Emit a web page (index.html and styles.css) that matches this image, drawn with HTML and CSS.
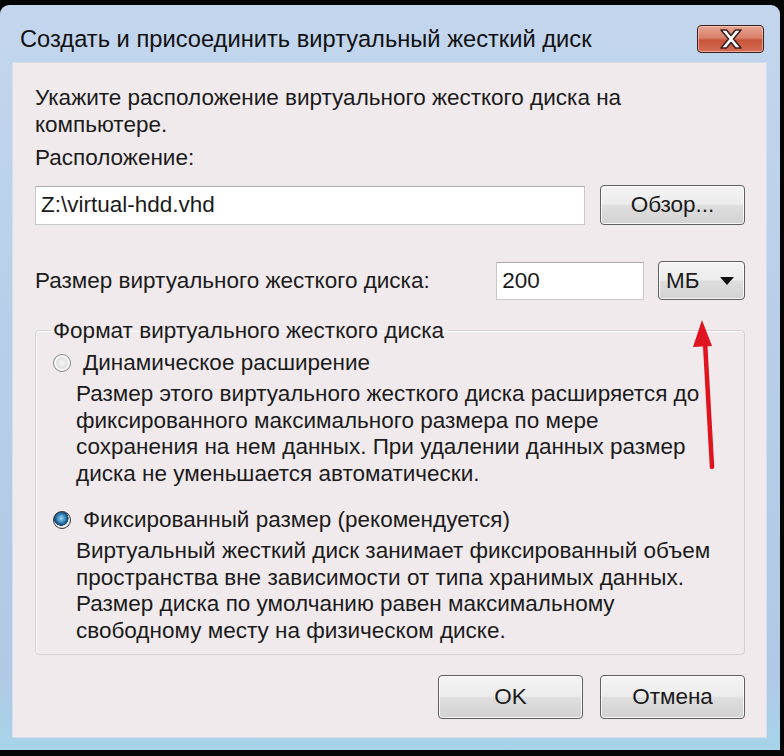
FILE: index.html
```html
<!DOCTYPE html>
<html lang="ru">
<head>
  <meta charset="UTF-8" />
  <title>Создать и присоединить виртуальный жесткий диск</title>
  <link rel="stylesheet" href="styles.css">
</head>
<body>
  <div class="window">
    <div class="titlebar">
      <span class="title">Создать и присоединить виртуальный жесткий диск</span>
      <button class="close" aria-label="Закрыть">
        <svg width="32" height="24" viewBox="0 0 32 24">
          <path d="M6 3 L13.5 12 L6 21 L11.5 21 L16 15.5 L20.5 21 L26 21 L18.5 12 L26 3 L20.5 3 L16 8.5 L11.5 3 Z" fill="#fff" stroke="#3b2320" stroke-width="1.6" stroke-linejoin="round"/>
        </svg>
      </button>
    </div>
    <div class="content">
      <p class="intro">Укажите расположение виртуального жесткого диска на<br>компьютере.</p>
      <p class="label">Расположение:</p>
      <div class="row path-row">
        <div class="field path">Z:\virtual-hdd.vhd</div>
        <button class="btn browse">Обзор...</button>
      </div>
      <div class="row size-row">
        <span class="size-label">Размер виртуального жесткого диска:</span>
        <div class="field size">200</div>
        <div class="btn unit">МБ <span class="caret"></span></div>
      </div>
      <fieldset class="group">
        <legend>Формат виртуального жесткого диска</legend>
        <div class="option">
          <span class="radio"></span>
          <span>Динамическое расширение</span>
        </div>
        <p class="desc">Размер этого виртуального жесткого диска расширяется до<br>фиксированного максимального размера по мере<br>сохранения на нем данных. При удалении данных размер<br>диска не уменьшается автоматически.</p>
        <div class="option second">
          <span class="radio checked"></span>
          <span>Фиксированный размер (рекомендуется)</span>
        </div>
        <p class="desc">Виртуальный жесткий диск занимает фиксированный объем<br>пространства вне зависимости от типа хранимых данных.<br>Размер диска по умолчанию равен максимальному<br>свободному месту на физическом диске.</p>
      </fieldset>
      <div class="actions">
        <button class="btn action">OK</button>
        <button class="btn action">Отмена</button>
      </div>
    </div>
    <svg class="arrow" width="40" height="160" viewBox="0 0 40 160">
      <path d="M22 147 L15 22" stroke="#e0141e" stroke-width="4.5" stroke-linecap="round"/>
      <path d="M12 0 L22 26 L3 27 Z" fill="#e0141e"/>
    </svg>
  </div>
</body>
</html>
```

FILE: styles.css
```css
body {
  margin: 0;
  background: #050505;
  font-family: "Liberation Sans", Arial, sans-serif;
  color: #1b1b1b;
  font-size: 22.5px;
}
.window {
  position: relative;
  margin-top: 5px;
  width: 780px;
  height: 745px;
  box-sizing: border-box;
  border-radius: 9px 9px 0 0;
  background: linear-gradient(to bottom, #c3d6ee 0%, #b9cfe9 40%, #b1c9e6 90%, #a6d4ea 100%);
  display: flex;
  flex-direction: column;
  padding: 0 13px 12px 12px;
}
.titlebar {
  height: 57px;
  display: flex;
  align-items: flex-start;
  justify-content: space-between;
}
.title {
  margin-top: 21px;
  margin-left: 8px;
  font-size: 23.7px;
  color: #111;
}
.close {
  margin-top: 20px;
  margin-right: 3px;
  width: 67px;
  height: 28px;
  padding: 0;
  border: 1px solid #3a2420;
  border-radius: 4px;
  background: linear-gradient(to bottom, #e8a491 0%, #d9806a 45%, #c8553b 55%, #d56d55 100%);
  box-shadow: inset 0 0 0 1px rgba(255, 220, 210, 0.5);
  display: flex;
  align-items: center;
  justify-content: center;
}
.content {
  flex: 1;
  background: #f0eaed;
  border: 1px solid #d5dfea;
  padding: 0 21px 0 22px;
}
p {
  margin: 0;
}
.intro {
  margin-top: 21px;
  line-height: 27px;
}
.label {
  margin-top: 6px;
  line-height: 27px;
}
.row {
  display: flex;
  align-items: center;
}
.path-row {
  margin-top: 14px;
  gap: 15px;
}
.field {
  background: #fff;
  border: 1px solid #c9c9cc;
  border-top-color: #a9aaad;
  box-sizing: border-box;
  display: flex;
  align-items: center;
  padding-left: 5px;
}
.path {
  width: 550px;
  height: 39px;
}
.btn {
  font-family: inherit;
  font-size: 22.5px;
  color: #1b1b1b;
  border: 1px solid #5f5f5f;
  border-radius: 4px;
  box-sizing: border-box;
  background: linear-gradient(to bottom, #f4f4f4 0%, #ececec 48%, #dedede 52%, #d2d2d2 100%);
  box-shadow: inset 0 0 0 1px rgba(255, 255, 255, 0.8);
  padding: 0;
}
.browse {
  width: 145px;
  height: 40px;
}
.size-row {
  margin-top: 36px;
}
.size-label {
  width: 462px;
}
.size {
  width: 148px;
  height: 38px;
}
.unit {
  margin-left: 14px;
  width: 87px;
  height: 39px;
  display: flex;
  align-items: center;
  justify-content: space-between;
  padding: 0 10px 0 7px;
}
.caret {
  width: 0;
  height: 0;
  border-left: 7px solid transparent;
  border-right: 7px solid transparent;
  border-top: 8px solid #111;
}
.group {
  margin: 17px 0 0;
  border: 1px solid #d3cfd2;
  border-radius: 4px;
  padding: 5px 0 10px 15px;
  box-shadow: inset 1px 1px 0 #fff;
}
.group legend {
  padding: 0 4px 0 2px;
  line-height: 27px;
}
.option {
  display: flex;
  align-items: center;
  gap: 12px;
  line-height: 27px;
  margin-left: 2px;
}
.option.second {
  margin-top: 19px;
}
.radio {
  width: 16px;
  height: 16px;
  border: 1px solid #8a8a8a;
  border-radius: 50%;
  background: radial-gradient(circle at 50% 50%, #f6f6f6 0%, #dcdcdc 60%, #c9c9c9 100%);
  box-shadow: inset 0 0 0 2px #fbfbfb;
}
.radio.checked {
  border-color: #30383f;
  background: radial-gradient(circle at 45% 40%, #9fd6f5 0%, #2f7fb8 35%, #173d63 55%, #f3f3f3 58%, #e5e5e5 100%);
  box-shadow: none;
}
.desc {
  margin-top: 5px;
  margin-left: 25px;
  line-height: 26.5px;
}
.actions {
  margin-top: 20px;
  display: flex;
  justify-content: flex-end;
  gap: 17px;
}
.action {
  width: 145px;
  height: 44px;
}
.arrow {
  position: absolute;
  left: 690px;
  top: 315px;
}
```
